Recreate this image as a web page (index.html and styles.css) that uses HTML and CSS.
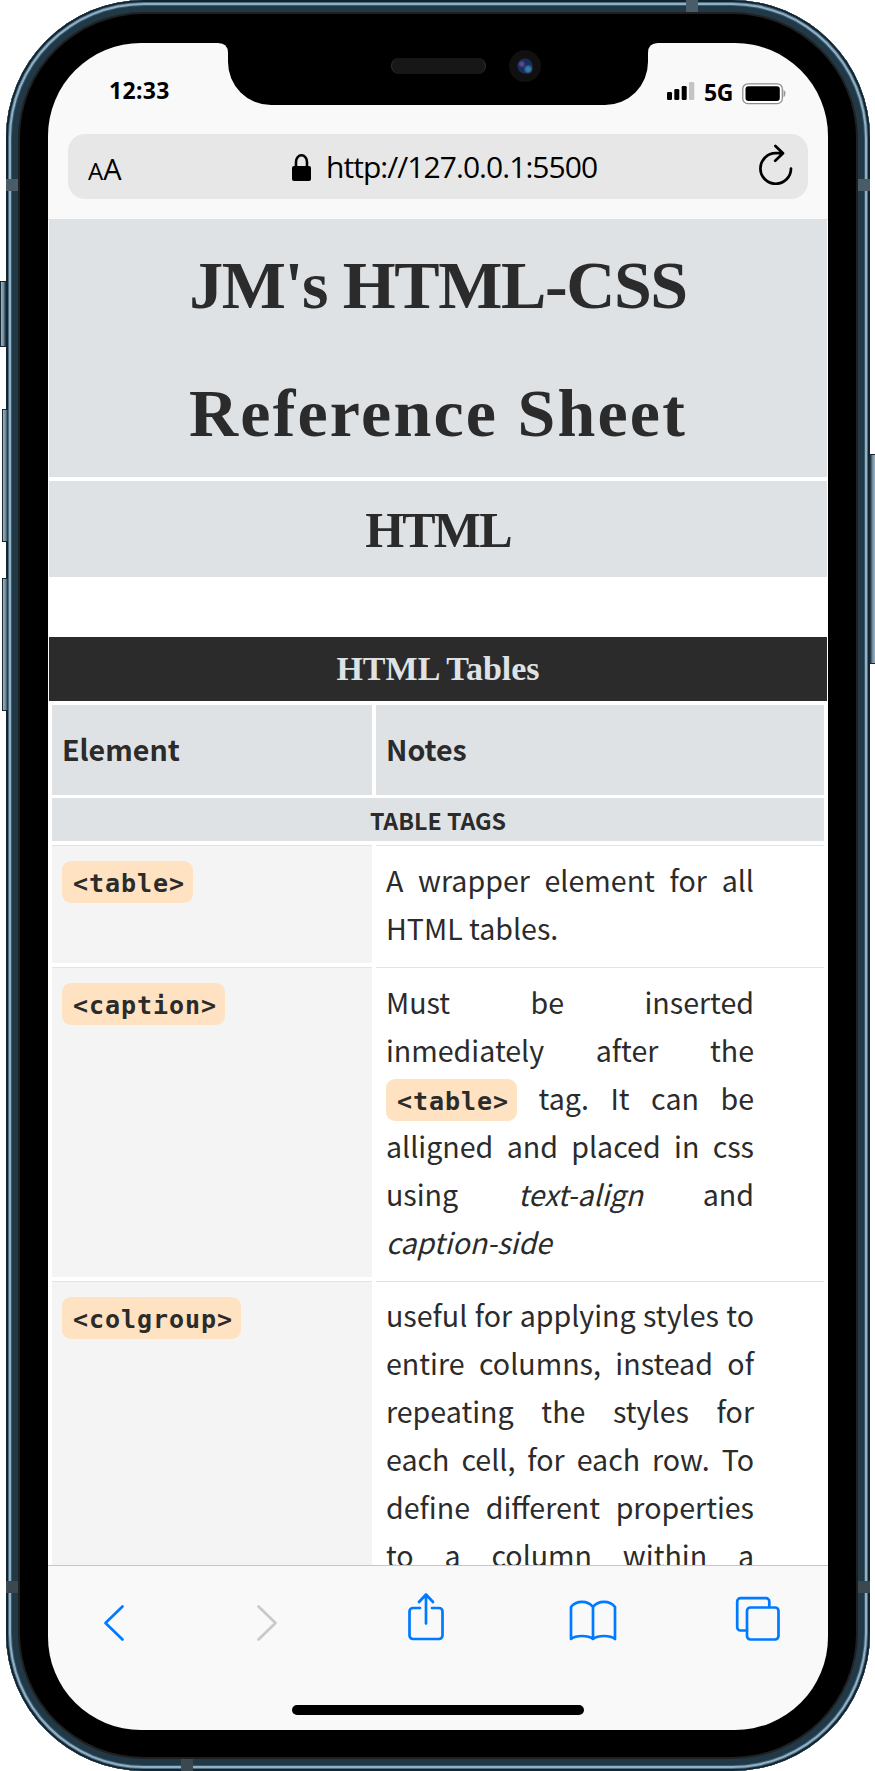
FILE: index.html
```html
<!DOCTYPE html>
<html lang="en">
<head>
<meta charset="utf-8">
<title>JM's HTML-CSS Reference Sheet</title>
<link rel="stylesheet" href="styles.css">
</head>
<body>
<div class="device">
  <i class="key key-mute"></i><i class="key key-up"></i><i class="key key-down"></i><i class="key key-power"></i>
  <div class="frame">
    <div class="screen">
      <div class="status">
        <span class="clock">12:33</span>
        <span class="signals">
          <svg class="bars" width="28" height="18" viewBox="0 0 28 18"><rect x="0" y="10" width="5" height="8" rx="1.3"/><rect x="7.3" y="7" width="5" height="11" rx="1.3"/><rect x="14.7" y="4" width="5" height="14" rx="1.3"/><rect x="22" y="0" width="5.3" height="18" rx="1.3" fill="#c4c4c4"/></svg>
          <span class="net">5G</span>
          <svg class="battery" width="44" height="22" viewBox="0 0 44 22"><rect x=".8" y=".8" width="39.5" height="19.8" rx="5" fill="#fff" stroke="#8f8f8f" stroke-width="1.3"/><rect x="3.5" y="3.3" width="34.3" height="14.8" rx="3"/><path d="M41.5 6.5q4 4 0 8z" fill="#999"/></svg>
        </span>
      </div>
      <div class="address">
        <span class="aa"><small>A</small>A</span>
        <span class="url">
          <svg class="lock" width="19" height="28" viewBox="0 0 19 28"><rect x="0" y="12" width="19" height="15" rx="2"/><path d="M4 13V8a5.5 6.7 0 0 1 11 0v5" fill="none" stroke="#000" stroke-width="2.6"/></svg>
          <span class="link">http://127.0.0.1:5500</span>
        </span>
        <svg class="reload" width="34" height="41" viewBox="0 0 34 41" fill="none" stroke="#000" stroke-width="2.7" stroke-linecap="round" stroke-linejoin="round"><path d="M32 24.5A15.3 15.3 0 1 1 16.7 9.2H23.5M16.4 2l7.6 7.2-7.8 7.5"/></svg>
      </div>
      <main class="page">
        <h1><span class="tight">JM's HTML-CSS</span><br><span class="loose">Reference Sheet</span></h1>
        <h2>HTML</h2>
        <section class="sheet">
          <h3>HTML Tables</h3>
          <div class="row head"><div>Element</div><div>Notes</div></div>
          <div class="group">TABLE TAGS</div>
          <div class="row entry"><div class="tag"><code>&lt;table&gt;</code></div><p>A wrapper element for all HTML tables.</p></div>
          <div class="row entry"><div class="tag"><code>&lt;caption&gt;</code></div><p>Must be inserted inmediately after the <code>&lt;table&gt;</code> tag. It can be alligned and placed in css using <em>text-align</em> and <em>caption-side</em></p></div>
          <div class="row entry"><div class="tag"><code>&lt;colgroup&gt;</code></div><p class="continued">useful for applying styles to entire columns, instead of repeating the styles for each cell, for each row. To define different properties to a column within a</p></div>
        </section>
      </main>
      <nav class="toolbar">
        <svg class="back" width="22" height="38" viewBox="0 0 22 38"><path d="M19.5 2.5 2.5 19l17 16.5"/></svg>
        <svg class="forward" width="22" height="38" viewBox="0 0 22 38"><path d="M2.5 2.5 19.5 19l-17 16.5"/></svg>
        <svg class="share" width="38" height="50" viewBox="0 0 38 50"><path d="M13 16H6a3.5 3.5 0 0 0-3.5 3.5v24A3.5 3.5 0 0 0 6 47h26a3.5 3.5 0 0 0 3.5-3.5v-24A3.5 3.5 0 0 0 32 16h-7M19 31.5V3M12 10l7-7.5 7 7.5"/></svg>
        <svg class="book" width="48" height="42" viewBox="0 0 48 42"><path d="M24 39V7C19 .2 7 .2 2 7v32C7 35 19 35 24 39 29 35 41 35 46 39V7C41 .2 29 .2 24 7"/></svg>
        <svg class="tabs" width="46" height="46" viewBox="0 0 46 46"><path d="M12 34.5H5.5a3.3 3.3 0 0 1-3.3-3.3V5.500a3.3 3.3 0 0 1 3.3-3.3H31a3.3 3.3 0 0 1 3.3 3.3V11"/><rect x="12" y="11.5" width="31.5" height="32" rx="3.5"/></svg>
      </nav>
      <i class="home"></i>
    </div>
  </div>
  <svg class="notch" width="440" height="62" viewBox="0 0 440 62"><path d="M0 0q10 0 10 10v9a43 43 0 0 0 43 43h334a43 43 0 0 0 43-43v-9q0-10 10-10z"/></svg>
  <i class="speaker"></i><i class="camera"></i>
  <i class="band band-l1"></i><i class="band band-l2"></i><i class="band band-r1"></i><i class="band band-r2"></i><i class="band band-t"></i><i class="band band-b"></i>
</div>
</body>
</html>
```

FILE: styles.css
```css
* { box-sizing: border-box; }
body { margin: 0; background: #fff; color: #2b2b2b; }
svg { display: block; flex: none; }
.device { position: relative; width: 875px; height: 1771px; overflow: hidden; }
.frame {
  width: 864px; height: 1771px; margin-left: 6px; padding: 43px 42px 41px;
  background: #000; border-radius: 138px;
  box-shadow: inset 0 0 0 2px #14242f, inset 0 0 0 3px #4c6d82, inset 0 0 0 5px #8fb0c5, inset 0 0 0 6px #3c586b, inset 0 0 0 12px #213847, inset 0 0 0 14px #202020;
}
.screen {
  width: 780px; height: 1687px; display: flex; flex-direction: column;
  background: #f9f9f9; border-radius: 93px; overflow: hidden; position: relative;
}
.status {
  flex: none; height: 91px; display: flex; justify-content: space-between; padding: 35px 42px 0 61px;
  font: 700 23px/28px "Noto Sans", sans-serif; color: #000;
}
.clock { margin-top: -2px; letter-spacing: .3px; }
.signals { display: flex; }
.bars { margin: 4px 9px 0 0; }
.net { width: 30px; margin: 0 8px 0 0; letter-spacing: -.3px; }
.battery { margin-top: 5px; }
.address {
  flex: none; height: 65px; margin: 0 20px 20px; padding: 0 15px 0 20px; border-radius: 17px; background: #e7e7e7; color: #000;
  display: flex; align-items: center; font: 30px/40px "Open Sans", sans-serif;
}
.aa { width: 40px; font-size: 29px; white-space: nowrap; padding-top: 6px; }
.aa small { font-size: 24px; }
.url { display: flex; align-items: center; margin-left: 164px; }
.lock { margin: 2px 15px 0 0; }
.link { letter-spacing: -.95px; }
.reload { margin: -5px 0 0 auto; }
.page { flex: none; height: 1346px; background: #fff; border-top: 1px solid #e0e0e0; padding: 0 1px; overflow: hidden; }
h1, h2, h3, p { margin: 0; }
h1, h2, h3 { font-family: "Liberation Serif", serif; text-align: center; background: #dfe2e5; }
h1 { height: 257px; padding-top: 1px; font-size: 68px; line-height: 128px; margin-bottom: 4px; white-space: nowrap; }
.tight { letter-spacing: -1.4px; }
.loose { letter-spacing: 2.2px; }
h2 { height: 96px; font-size: 50px; line-height: 98px; letter-spacing: -1.8px; }
.sheet { margin-top: 60px; }
h3 { height: 64px; font-size: 34px; line-height: 64px; background: #2b2b2b; color: #dfe2e5; margin: 0 0 4px; }
.row { display: grid; grid-template-columns: 320px 448px; gap: 4px; margin: 0 3px 3px; }
.head { height: 90px; font: 700 28.6px/87px "Noto Sans CJK SC", sans-serif; }
.head div { background: #dfe2e5; padding-left: 10px; }
.group { height: 43px; margin: 0 3px 4px; background: #dfe2e5; text-align: center; font: 700 23.2px/45px "Noto Sans CJK SC", sans-serif; }
.entry { margin-bottom: 4px; font: 28.6px/48px "Noto Sans CJK SC", sans-serif; }
.tag { background: #f4f4f4; border-top: 1px solid #e0e3e7; padding: 10px 10px 0; }
.entry p { border-top: 1px solid #e0e3e7; padding: 10px 70px 11px 10px; text-align: justify; }
.entry .continued { padding-top: 9px; text-align-last: justify; }
code {
  display: inline-block; height: 42px; margin: -3px 0; padding: 0 8px 0 11px; border-radius: 9px; background: #ffe2c2; vertical-align: middle; position: relative; top: -2px;
  font: 700 25px/45px "DejaVu Sans Mono", monospace; letter-spacing: .95px;
}
.toolbar { flex: 1; border-top: 1px solid #c6c6c6; display: flex; align-items: flex-start; }
.toolbar svg { fill: none; stroke: #007aff; stroke-width: 2.7; stroke-linecap: round; stroke-linejoin: round; }
.toolbar .back { margin: 38px 0 0 55px; }
.toolbar .forward { margin: 38px 0 0 131px; stroke: #c9c9c9; }
.toolbar .share { margin: 26px 0 0 129px; }
.toolbar .book { margin: 34px 0 0 124px; }
.toolbar .tabs { margin: 30px 0 0 118px; }
.home { position: absolute; left: 244px; bottom: 15px; width: 292px; height: 10px; border-radius: 5px; background: #000; }
.notch { position: absolute; left: 218px; top: 43px; }
.speaker { position: absolute; left: 391px; top: 58px; width: 95px; height: 16px; border-radius: 8px; background: #171717; border: 1px solid #303030; border-width: 0 1px; }
.camera { position: absolute; left: 509px; top: 50px; width: 32px; height: 32px; border-radius: 50%; background: radial-gradient(circle at 40% 44%, #6b4795 0 1px, transparent 4px), radial-gradient(circle at 60% 60%, #3978a6 0 2px, transparent 5px), radial-gradient(circle, #172d5c 0 7px, #101010 8px); }
.key { position: absolute; width: 6px; border: 1px solid #182832; border-right: 0; background: linear-gradient(90deg, #9bb5c6, #6f8b9d 50%, #182832); }
.key-mute { left: 0; top: 281px; height: 66px; }
.key-up { left: 2px; top: 409px; height: 133px; }
.key-down { left: 2px; top: 578px; height: 133px; }
.key-power { left: 869px; top: 454px; height: 210px; background: linear-gradient(90deg, #182832, #6f8b9d 50%, #9bb5c6); }
.band { position: absolute; width: 12px; height: 12px; background: #4a5c67; }
.band-l1 { left: 6px; top: 179px; }
.band-l2 { left: 6px; top: 1581px; background: #3b4850; }
.band-r1 { left: 858px; top: 179px; }
.band-r2 { left: 858px; top: 1581px; background: #3b4850; }
.band-t { left: 686px; top: 0; }
.band-b { left: 181px; top: 1759px; background: #3b4850; }
```
